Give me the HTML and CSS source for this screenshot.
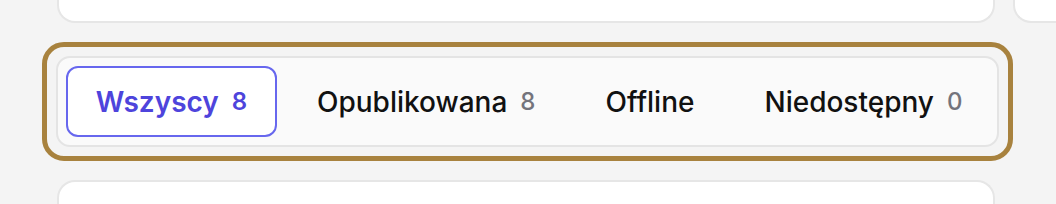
FILE: index.html
```html
<!DOCTYPE html>
<html lang="pl">
  <head>
    <meta charset="UTF-8" />
    <meta name="viewport" content="width=device-width, initial-scale=1.0" />
    <title>Filtry</title>
    <link rel="stylesheet" href="styles.css">
  </head>
  <body>
    <div class="top-row">
      <div class="card card-top"></div>
      <div class="card card-top card-side"></div>
    </div>

    <div class="focus-ring">
      <div class="tabs">
        <button class="tab active">Wszyscy <span class="count">8</span></button>
        <button class="tab">Opublikowana <span class="count">8</span></button>
        <button class="tab">Offline</button>
        <button class="tab">Niedostępny <span class="count">0</span></button>
      </div>
    </div>

    <div class="card card-bottom"></div>
  </body>
</html>
```

FILE: styles.css
```css
body {
  margin: 0;
  background-color: #f4f4f4;
  font-family: Inter, "Noto Sans", sans-serif;
  overflow: hidden;
}

.card {
  background-color: #fff;
  border: 2px solid #e6e6e6;
  box-sizing: border-box;
}

.top-row {
  display: flex;
  gap: 18px;
  padding-left: 57px;
}

.card-top {
  width: 938px;
  height: 23px;
  border-top: 0;
  border-radius: 0 0 18px 18px;
}

.card-side {
  flex: 1;
  border-right: 0;
  border-radius: 0 0 0 18px;
}

/* zaznaczenie wokol paska zakladek */
.focus-ring {
  margin: 19px 0 0 42px;
  width: 971px;
  padding: 9px;
  border: 5px solid #a8823e;
  border-radius: 22px;
  box-sizing: border-box;
}

.tabs {
  display: flex;
  gap: 10px;
  padding: 8px;
  border: 2px solid #e4e4e4;
  border-radius: 14px;
  background-color: #fafafa;
}

.tab {
  display: flex;
  align-items: center;
  gap: 13px;
  height: 71px;
  padding: 0 28px;
  border: 2px solid transparent;
  border-radius: 12px;
  background: none;
  font-family: inherit;
  font-size: 28px;
  font-weight: 500;
  color: #111;
  cursor: pointer;
}

.tab .count {
  font-size: 24px;
  color: #74747c;
}

.tab.active {
  width: 211px;
  justify-content: center;
  background-color: #fff;
  border-color: #6767ee;
  color: #4e44dc;
  font-weight: 600;
}

.tab.active .count {
  color: #4e44dc;
}

.card-bottom {
  margin: 19px 0 0 57px;
  width: 938px;
  height: 24px;
  border-radius: 18px 18px 0 0;
  border-bottom: 0;
}
```
